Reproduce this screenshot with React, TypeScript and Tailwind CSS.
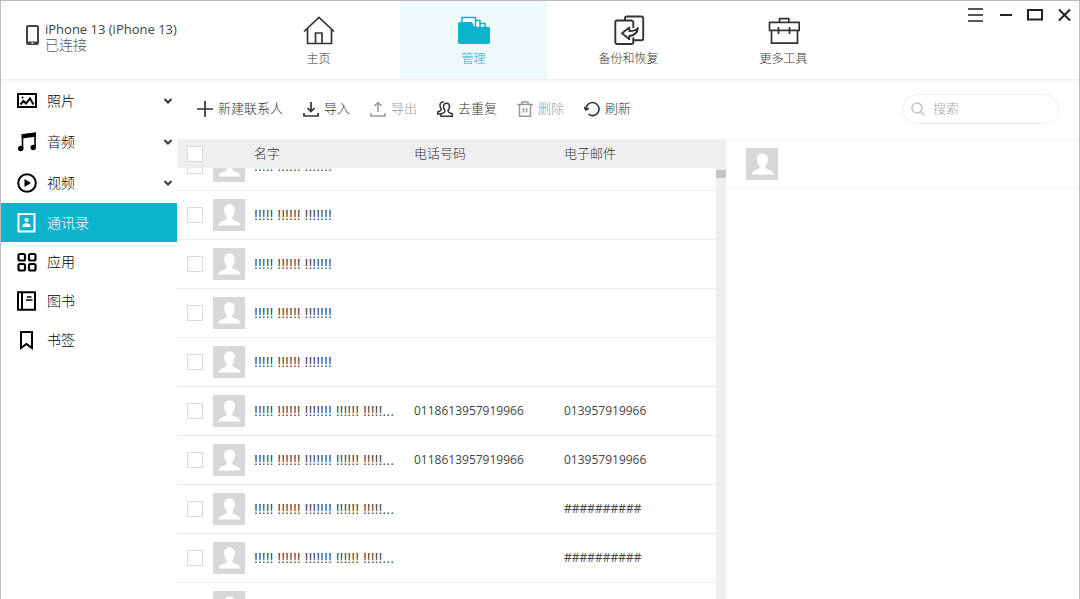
import { useLayoutEffect, useRef, type ReactNode } from "react";

interface Contact {
  id: number;
  name: string;
  phone?: string;
  email?: string;
}

const SHORT_NAME = "!!!!! !!!!!! !!!!!!!";
const LONG_NAME = "!!!!! !!!!!! !!!!!!! !!!!!! !!!!!...";

const contacts: Contact[] = [
  { id: 1, name: SHORT_NAME },
  { id: 2, name: SHORT_NAME },
  { id: 3, name: SHORT_NAME },
  { id: 4, name: SHORT_NAME },
  { id: 5, name: SHORT_NAME },
  { id: 6, name: LONG_NAME, phone: "0118613957919966", email: "013957919966" },
  { id: 7, name: LONG_NAME, phone: "0118613957919966", email: "013957919966" },
  { id: 8, name: LONG_NAME, email: "##########" },
  { id: 9, name: LONG_NAME, email: "##########" },
  { id: 10, name: "" },
];

const Icon = ({ box, className, sw = 2, children }: { box: string; className: string; sw?: number; children: ReactNode }) => (
  <svg viewBox={box} className={className} fill="none" stroke="currentColor" strokeWidth={sw} aria-hidden="true">
    {children}
  </svg>
);

const HomeIcon = () => (
  <Icon box="0 0 32 32" className="size-8" sw={1.7}>
    <path d="M1 16.5 16 2.5l15 14M4.5 13.5v15h24v-15M12.5 28.5V18h6.5v10.5" />
  </Icon>
);

const FolderIcon = () => (
  <Icon box="0 0 32 32" className="size-8" sw={1.5}>
    <path d="M21 14V8.5h6V14" fill="#fff" />
    <path d="M15 12V5.5h7V12" fill="#fff" />
    <path d="M4 9V2.5h13.500V12" fill="#fff" />
    <path
      d="M2 7h11.5c1.5 0 1.5 3.8 3.500 4.800h13a2 2 0 0 1 2 2V27a2 2 0 0 1-2 2H2a2 2 0 0 1-2-2V9a2 2 0 0 1 2-2Z"
      fill="currentColor"
      stroke="none"
    />
  </Icon>
);

const BackupIcon = () => (
  <Icon box="0 0 32 32" className="size-8" sw={1.9}>
    <path d="M12 5V3.2A1.7 1.7 0 0 1 13.7 1.5H28.5A1.7 1.7 0 0 1 30.2 3.2V23.5A1.7 1.7 0 0 1 28.5 25.2H20.5" />
    <path d="M20.3 13V7L18.8 5.5H4A1.7 1.7 0 0 0 2.3 7.2V27.3A1.7 1.7 0 0 0 4 29H18.6A1.7 1.7 0 0 0 20.3 27.3V22.5" />
    <path d="M9 18.300 16.300 12.500V16c3.700 0 7-.8 8.700-3-.7 4.700-3 7.500-8.700 8v3.300Z" strokeLinejoin="round" />
  </Icon>
);

const ToolboxIcon = () => (
  <Icon box="0 0 32 32" className="size-8" sw={1.7}>
    <path d="M11.5 7V3.7h9.3V7M1.5 7.3h29.7v8H1.5zM3.5 15.5v12.7h26V15.5M10.500 12v7M21.500 12v7" />
  </Icon>
);

const Avatar = () => (
  <svg viewBox="0 0 32 32" className="block size-8" aria-hidden="true">
    <path fill="#d8d8d8" d="M0 0h32v32H0z" />
    <path
      fill="#fff"
      d="M16.5 5.5c3.7 0 5.6 2.6 5.3 6.2-.2 2.8-1.2 4.7-2.4 6.2-.3 1.5.1 2.6 1.2 3.2 2.9 1.3 6.2 1.800 6.900 5.400H5.500c.7-3.600 4-4.100 6.900-5.400 1.100-.6 1.500-1.700 1.200-3.200-1.200-1.500-2.200-3.400-2.400-6.200-.3-3.600 1.600-6.200 5.300-6.200Z"
    />
  </svg>
);

const tabs = [
  { label: "主页", icon: <HomeIcon /> },
  { label: "管理", icon: <FolderIcon />, active: true },
  { label: "备份和恢复", icon: <BackupIcon /> },
  { label: "更多工具", icon: <ToolboxIcon /> },
];

const sideIcon = "size-5 shrink-0";

const sideItems = [
  {
    label: "照片",
    expandable: true,
    icon: (
      <Icon box="0 0 20 20" className={sideIcon}>
        <path d="M1 3h18v13H1z" />
        <path d="m3.500 13.500 3-3.500 2.500 2.500 4-5 3.500 6" />
        <circle cx="5.500" cy="6.500" r="1" fill="currentColor" stroke="none" />
      </Icon>
    ),
  },
  {
    label: "音频",
    expandable: true,
    icon: (
      <Icon box="0 0 20 20" className={sideIcon} sw={1.6}>
        <path d="M5.500 16.500V3L18 1.500V15" />
        <path d="M5.500 3 18 1.500V4L5.500 5.500z" fill="currentColor" />
        <circle cx="3.700" cy="16.500" r="2.700" fill="currentColor" stroke="none" />
        <circle cx="16.200" cy="15.500" r="2.700" fill="currentColor" stroke="none" />
      </Icon>
    ),
  },
  {
    label: "视频",
    expandable: true,
    icon: (
      <Icon box="0 0 20 20" className={sideIcon}>
        <circle cx="10" cy="10" r="8.800" />
        <path d="M7.500 6v8l6.500-4z" fill="currentColor" stroke="none" />
      </Icon>
    ),
  },
  {
    label: "通讯录",
    active: true,
    icon: (
      <Icon box="0 0 20 20" className={sideIcon}>
        <path d="M1.500 1h16v17.500h-16z" />
        <circle cx="9.500" cy="7" r="2.100" fill="currentColor" stroke="none" />
        <path d="M5.500 14c0-3 1.500-3.700 4-3.700s4 .7 4 3.700z" fill="currentColor" stroke="none" />
      </Icon>
    ),
  },
  {
    label: "应用",
    icon: (
      <Icon box="0 0 20 20" className={sideIcon} sw={2.2}>
        <rect x="1.500" y="2" width="6.500" height="6.500" rx="1.500" />
        <rect x="12" y="2" width="6.500" height="6.500" rx="1.500" />
        <rect x="1.500" y="12" width="6.500" height="6.500" rx="1.500" />
        <rect x="12" y="12" width="6.500" height="6.500" rx="1.500" />
      </Icon>
    ),
  },
  {
    label: "图书",
    icon: (
      <Icon box="0 0 20 20" className={sideIcon}>
        <path d="M1 1.200h17v17.600H1zM5 1v18" />
        <path d="M10 6h4.500M9 9h6.500" strokeWidth="1.400" />
      </Icon>
    ),
  },
  {
    label: "书签",
    icon: (
      <Icon box="0 0 20 20" className={sideIcon}>
        <path d="M4 2h11v16l-5.500-4L4 18z" />
      </Icon>
    ),
  },
];

const toolIcon = "size-4 shrink-0";

const tools = [
  {
    label: "新建联系人",
    icon: (
      <Icon box="0 0 16 16" className={toolIcon} sw={1.7}>
        <path d="M8 0v16M0 8h16" />
      </Icon>
    ),
  },
  {
    label: "导入",
    icon: (
      <Icon box="0 0 16 16" className={toolIcon} sw={1.7}>
        <path d="M8 1v9.500M4.500 7 8 10.500 11.500 7M1 12v3h14v-3" />
      </Icon>
    ),
  },
  {
    label: "导出",
    disabled: true,
    icon: (
      <Icon box="0 0 16 16" className={toolIcon} sw={1.5}>
        <path d="M8 11V1.500M4.500 5 8 1.500 11.500 5M1 12v3h14v-3" />
      </Icon>
    ),
  },
  {
    label: "去重复",
    icon: (
      <Icon box="0 0 16 16" className={toolIcon} sw={1.5}>
        <path d="M9.500 2.300c2 0 3 1.300 3 3.200 0 2-.7 3-1.500 4 0 2 1 2.500 4.300 3.200v2.500H4v-2.500c3.200-.7 4-1.200 4-3.200-.8-1-1.500-2-1.500-4 0-1.900 1-3.200 3-3.200Z" />
        <path d="M7 1.200C5.500.4 3 1.300 3 4c0 2 .4 2.800 1.200 4 0 1.700-1 2.200-3.500 3V13H4" />
      </Icon>
    ),
  },
  {
    label: "删除",
    disabled: true,
    icon: (
      <Icon box="0 0 16 16" className={toolIcon} sw={1.5}>
        <path d="M0 3.500h16M5 3V1h6v2M2.500 3.500v11.700h11V3.500M6.500 7v4.500M9.500 7v4.500" />
      </Icon>
    ),
  },
  {
    label: "刷新",
    icon: (
      <Icon box="0 0 16 16" className={toolIcon} sw={1.6}>
        <path d="M2 8a6.500 6.500 0 1 1 2.500 5.200" />
        <path d="m0 6 2 3 3-1.800" />
      </Icon>
    ),
  },
];

const checkboxClass = "block size-4 appearance-none border border-[#d9d9de] bg-white checked:bg-[#0db2cd]";

const windowButtons = [
  { label: "菜单", path: "M0 2h16M0 8h16M0 14h16", sw: 1.6 },
  { label: "最小化", path: "M2 8h12", sw: 2 },
  { label: "最大化", path: "M0 3h14v9.500H0z", sw: 2 },
  { label: "关闭", path: "m1 2.500 11 11M12 2.500l-11 11", sw: 2 },
];

function Header() {
  return (
    <header className="flex h-[78px] shrink-0 shadow-[0_1px_3px_rgba(0,0,0,0.1)]">
      <div className="flex w-[244px] shrink-0 items-start gap-1 pt-5 pl-6 text-[#444]">
        <svg viewBox="0 0 16 20" className="mt-1 h-5 w-4" aria-hidden="true">
          <path fillRule="evenodd" fill="#444" d="M3 0h9a2 2 0 0 1 2 2v16a2 2 0 0 1-2 2H3a2 2 0 0 1-2-2V2a2 2 0 0 1 2-2Zm0 2v14.500h9V2Zm3.500 15.500v1.200h2v-1.200Z" />
        </svg>
        <div>
          <p className="text-[13px] leading-4">iPhone 13 (iPhone 13)</p>
          <p className="text-sm leading-4 font-light text-[#555]">已连接</p>
        </div>
      </div>
      <nav className="flex gap-2">
        {tabs.map((tab) => (
          <button
            key={tab.label}
            type="button"
            className={`flex w-[147px] flex-col items-center gap-1 pt-3.5 text-xs font-light ${tab.active ? "bg-[#edf9fb] text-[#0db2cd]" : "text-[#333]"}`}
          >
            {tab.icon}
            {tab.label}
          </button>
        ))}
      </nav>
      <div className="ml-auto flex items-start gap-3.5 pt-1.5 pr-1.5 text-[#222]">
        {windowButtons.map((btn) => (
          <button key={btn.label} type="button" aria-label={btn.label}>
            <svg viewBox="-1 0 16 16" className="size-4" fill="none" stroke="currentColor" strokeWidth={btn.sw} aria-hidden="true">
              <path d={btn.path} />
            </svg>
          </button>
        ))}
      </div>
    </header>
  );
}

function Sidebar() {
  return (
    <nav className="w-44 shrink-0 pt-px">
      {sideItems.map((item) => (
        <button
          key={item.label}
          type="button"
          className={`flex w-full items-center gap-2.5 pr-1 pl-4 text-sm font-light ${item.expandable ? "h-[41px]" : "h-[39px]"} ${item.active ? "bg-[#0db2cd] text-white" : "text-black"}`}
        >
          {item.icon}
          {item.label}
          {item.expandable && (
            <svg viewBox="0 0 10 10" className="ml-auto size-2.5" fill="none" stroke="#333" strokeWidth="2" aria-hidden="true">
              <path d="m1.500 3 3.500 3.500L8.500 3" />
            </svg>
          )}
        </button>
      ))}
    </nav>
  );
}

function Toolbar() {
  return (
    <div className="flex h-[60px] shrink-0 items-center gap-5 px-5">
      {tools.map((tool) => (
        <button
          key={tool.label}
          type="button"
          disabled={tool.disabled}
          className="flex items-center gap-[5px] text-[13px] font-light whitespace-nowrap text-[#333] disabled:text-[#999]"
        >
          {tool.icon}
          {tool.label}
        </button>
      ))}
      <label className="ml-auto flex h-[30px] w-[157px] items-center gap-2 rounded-full border border-[#ededed] px-2">
        <svg viewBox="0 0 14 14" className="size-3.5 shrink-0" fill="none" stroke="#c4c4c4" strokeWidth="1.500" aria-hidden="true">
          <circle cx="6" cy="6" r="5" />
          <path d="m9.500 9.500 4 4" />
        </svg>
        <input type="text" aria-label="搜索" placeholder="搜索" className="w-full min-w-0 text-[13px] font-light outline-none placeholder:text-[#aaa]" />
      </label>
    </div>
  );
}

function ContactTable() {
  const scroller = useRef<HTMLDivElement>(null);

  // open slightly scrolled, with the first contact partly under the header
  useLayoutEffect(() => {
    if (scroller.current) scroller.current.scrollTop = 26;
  }, []);

  return (
    <div className="flex w-[549px] shrink-0 bg-[#efefef]">
      <div ref={scroller} className="min-w-0 flex-1 overflow-y-auto bg-white [scrollbar-width:none]">
        <table className="w-full table-fixed border-separate border-spacing-0 text-left">
          <thead className="sticky top-0 bg-[#efefef] text-[13px] text-[#333]">
            <tr className="h-[29px]">
              <th className="w-9 pl-2.5">
                <input type="checkbox" aria-label="全选" className={checkboxClass} />
              </th>
              <th className="w-[41px]" />
              <th className="w-40 font-light">名字</th>
              <th className="w-[150px] font-light">电话号码</th>
              <th className="font-light">电子邮件</th>
            </tr>
          </thead>
          <tbody className="text-xs text-[#444] [&_td]:border-b [&_td]:border-[#ececec]">
            {contacts.map((c) => (
              <tr key={c.id} className="h-[49px]">
                <td className="pl-2.5">
                  <input type="checkbox" aria-label={c.name || "联系人"} className={checkboxClass} />
                </td>
                <td>
                  <Avatar />
                </td>
                <td className="font-['Liberation_Sans',sans-serif] text-sm leading-4 whitespace-nowrap">{c.name}</td>
                <td>{c.phone}</td>
                <td>{c.email}</td>
              </tr>
            ))}
          </tbody>
        </table>
      </div>
      <div className="w-2.5 shrink-0 pt-[31px]">
        <div className="h-2 bg-[#c4c4c4]" />
      </div>
    </div>
  );
}

export default function App() {
  return (
    <div className="flex h-screen flex-col overflow-hidden border border-b-0 border-[#bbb] bg-white font-['Open_Sans','Noto_Sans_CJK_SC',sans-serif] antialiased">
      <Header />
      <div className="flex min-h-0 flex-1">
        <Sidebar />
        <main className="flex min-w-0 flex-1 flex-col">
          <Toolbar />
          <div className="flex min-h-0 flex-1">
            <ContactTable />
            <section className="min-w-0 flex-1">
              <div className="flex h-[50px] items-center border-y border-[#f0f0f0] px-5">
                <Avatar />
              </div>
            </section>
          </div>
        </main>
      </div>
    </div>
  );
}
